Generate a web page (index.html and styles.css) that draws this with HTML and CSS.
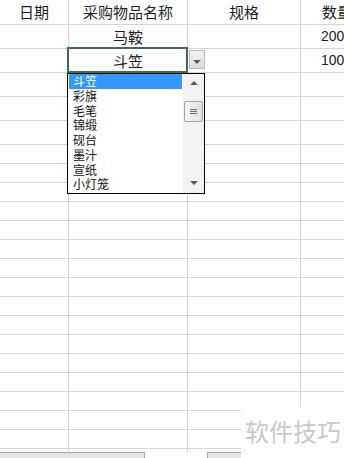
FILE: index.html
```html
<!DOCTYPE html>
<html lang="zh-CN">
<head>
<meta charset="utf-8">
<title>采购表</title>
<link rel="stylesheet" href="styles.css">
</head>
<body>
<div class="sheet">
  <div class="grid">
    <div class="c">日期</div><div class="c">采购物品名称</div><div class="c">规格</div><div class="c num">数量</div>
    <div class="c"></div><div class="c">马鞍</div><div class="c"></div><div class="c num">200</div>
    <div class="c"></div><div class="c active">斗笠</div><div class="c"></div><div class="c num">100</div>
    <div class="c"></div><div class="c"></div><div class="c"></div><div class="c"></div>
    <div class="c"></div><div class="c"></div><div class="c"></div><div class="c"></div>
    <div class="c"></div><div class="c"></div><div class="c"></div><div class="c"></div>
    <div class="c"></div><div class="c"></div><div class="c"></div><div class="c"></div>
    <div class="c"></div><div class="c"></div><div class="c"></div><div class="c"></div>
    <div class="c"></div><div class="c"></div><div class="c"></div><div class="c"></div>
    <div class="c"></div><div class="c"></div><div class="c"></div><div class="c"></div>
    <div class="c"></div><div class="c"></div><div class="c"></div><div class="c"></div>
    <div class="c"></div><div class="c"></div><div class="c"></div><div class="c"></div>
    <div class="c"></div><div class="c"></div><div class="c"></div><div class="c"></div>
    <div class="c"></div><div class="c"></div><div class="c"></div><div class="c"></div>
    <div class="c"></div><div class="c"></div><div class="c"></div><div class="c"></div>
    <div class="c"></div><div class="c"></div><div class="c"></div><div class="c"></div>
    <div class="c"></div><div class="c"></div><div class="c"></div><div class="c"></div>
    <div class="c"></div><div class="c"></div><div class="c"></div><div class="c"></div>
    <div class="c"></div><div class="c"></div><div class="c"></div><div class="c"></div>
    <div class="c"></div><div class="c"></div><div class="c"></div><div class="c"></div>
    <div class="c"></div><div class="c"></div><div class="c"></div><div class="c"></div>
    <div class="c"></div><div class="c"></div><div class="c"></div><div class="c"></div>
    <div class="c tail"></div><div class="c tail"></div><div class="c tail"></div><div class="c tail"></div>
  </div>
  <div class="tabs">
    <div class="tab tab-a"></div>
    <div class="tab-gap"></div>
    <div class="tab tab-b"></div>
  </div>

  <div class="dd-btn"><span class="tri-down"></span></div>

  <div class="dd-list">
    <div class="items">
      <div class="item sel">斗笠</div>
      <div class="item">彩旗</div>
      <div class="item">毛笔</div>
      <div class="item">锦缎</div>
      <div class="item">砚台</div>
      <div class="item">墨汁</div>
      <div class="item">宣纸</div>
      <div class="item">小灯笼</div>
    </div>
    <div class="sbar">
      <div class="sb-up"><span class="tri-up"></span></div>
      <div class="thumb"><span class="grip"></span></div>
      <div class="sb-fill"></div>
      <div class="sb-down"><span class="tri-down"></span></div>
    </div>
  </div>

  <div class="watermark">软件技巧</div>
</div>
</body>
</html>
```
FILE: styles.css
```css
html, body {
  margin: 0;
  padding: 0;
  background: #fff;
}
body {
  width: 344px;
  height: 458px;
  overflow: hidden;
  font-family: "Noto Sans CJK SC", "Noto Sans", sans-serif;
  color: #1c1c1c;
}
.sheet {
  position: relative;
  width: 344px;
  height: 458px;
  overflow: hidden;
}
.grid {
  display: grid;
  grid-template-columns: 69px 119px 113px 1fr;
  grid-template-rows: 25px repeat(5, 24px) repeat(16, 19px) 3px;
}
.c {
  box-sizing: border-box;
  border-right: 1px solid #d4d4d4;
  border-bottom: 1px solid #d4d4d4;
  font-size: 15px;
  line-height: 23px;
  text-align: center;
  white-space: nowrap;
}
.c.num {
  text-align: left;
  padding-left: 21px;
  border-right: none;
}
.grid > .c:nth-child(-n+4) { line-height: 24px; }
.c.num:not(:nth-child(4)) {
  font-family: "Liberation Sans", Arial, sans-serif;
  font-size: 14px;
  padding-left: 20px;
}
.c.tail { border-bottom: none; }
.c.active { position: relative; }
.c.active::after {
  content: "";
  position: absolute;
  left: -2px;
  top: -2px;
  right: -1px;
  bottom: -1px;
  border: 2px solid #3b6e4e;
}

.tabs {
  display: flex;
  height: 6px;
}
.tab {
  box-sizing: border-box;
  background: #e6e6e6;
  border-top: 1px solid #a8a8a8;
}
.tab-a { width: 145px; border-right: 1px solid #a8a8a8; }
.tab-gap { width: 62px; }
.tab-b { width: 40px; border-left: 1px solid #a8a8a8; }

.dd-btn {
  position: absolute;
  left: 189px;
  top: 50px;
  width: 16px;
  height: 19px;
  box-sizing: border-box;
  border: 1px solid #b9b9b9;
  background: linear-gradient(#f4f4f4, #dcdcdc);
  display: flex;
  justify-content: center;
  padding-top: 9px;
}
.tri-down {
  width: 0;
  height: 0;
  border-left: 4px solid transparent;
  border-right: 4px solid transparent;
  border-top: 4px solid #5a5a5a;
}
.tri-up {
  width: 0;
  height: 0;
  border-left: 4px solid transparent;
  border-right: 4px solid transparent;
  border-bottom: 4px solid #5a5a5a;
}

.dd-list {
  position: absolute;
  left: 67px;
  top: 73px;
  width: 138px;
  height: 121px;
  box-sizing: border-box;
  border: 1px solid #000;
  background: #fff;
  display: flex;
}
.items {
  flex: 1;
  padding: 0 1px;
}
.item {
  height: 14.75px;
  line-height: 14.75px;
  font-size: 12px;
  padding-left: 4px;
  color: #111;
  white-space: nowrap;
}
.item.sel {
  background: #3399ff;
  color: #fff;
}
.sbar {
  width: 21px;
  background: #f3f3f3;
  display: flex;
  flex-direction: column;
  align-items: center;
}
.sb-up {
  height: 18px;
  display: flex;
  align-items: center;
  justify-content: center;
}
.thumb {
  margin-top: 9px;
  width: 19px;
  height: 21px;
  box-sizing: border-box;
  border: 1px solid #a2a2a2;
  border-radius: 2px;
  background: linear-gradient(to right, #f6f6f6, #e0e0e0);
  display: flex;
  align-items: center;
  justify-content: center;
}
.grip {
  width: 7px;
  height: 5px;
  background: repeating-linear-gradient(#6e6e6e 0 1px, transparent 1px 2px);
}
.sb-fill { flex: 1; }
.sb-down {
  height: 16px;
  margin-bottom: 2px;
  display: flex;
  align-items: center;
  justify-content: center;
}

.watermark {
  position: absolute;
  left: 241px;
  top: 407px;
  width: 103px;
  height: 51px;
  box-sizing: border-box;
  background: #fff;
  padding: 11px 0 0 4px;
  font-size: 24px;
  line-height: 26px;
  color: #c8c8c8;
  white-space: nowrap;
}
```
